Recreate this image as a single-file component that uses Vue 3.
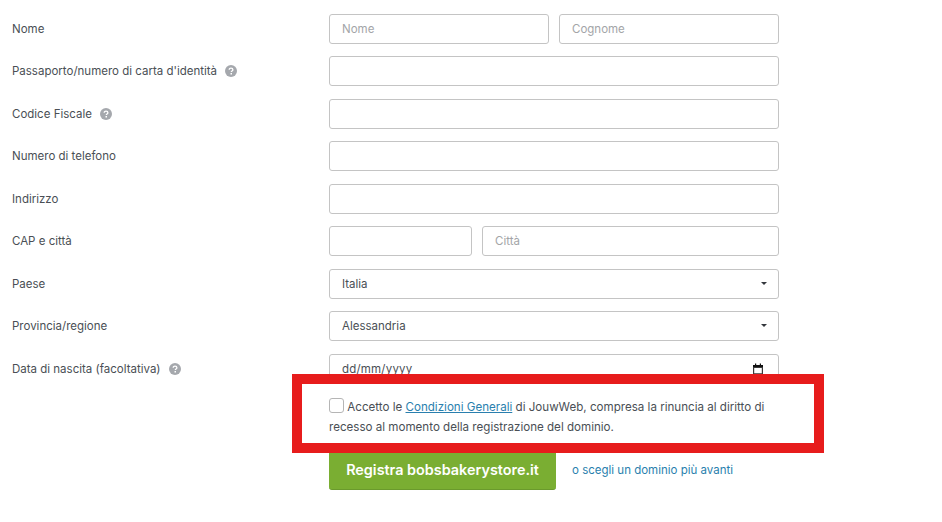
<template>
  <main class="page">
    <form class="form" @submit.prevent>
      <div v-for="row in rows" :key="row.label" class="row">
        <label class="row__label">
          {{ row.label }}
          <svg v-if="row.help" class="help" viewBox="0 0 12 12" width="12" height="12">
            <circle cx="6" cy="6" r="6" fill="#a5a8ad" />
            <path d="M4.2 4.7c0-1 .8-1.6 1.8-1.6s1.9.6 1.9 1.6c0 1.3-1.6 1.3-1.6 2.4" fill="none" stroke="#fff" stroke-width="1.3" />
            <rect x="5.5" y="8" width="1.5" height="1.5" fill="#fff" />
          </svg>
        </label>
        <div class="row__fields" :class="row.layout">
          <template v-for="field in row.fields" :key="field.id">
            <div v-if="field.type === 'select'" class="select">
              <select class="input">
                <option>{{ field.value }}</option>
              </select>
              <span class="caret"></span>
            </div>
            <div v-else-if="field.type === 'date'" class="select">
              <input class="input input--date" placeholder="dd/mm/yyyy" />
              <svg class="calendar" viewBox="0 0 12 12" width="12" height="12">
                <path d="M1 2h10v9.5H1z M2.2 5v5.3h7.6V5z" fill="#3a3a3a" fill-rule="evenodd" />
                <path d="M1 2h10v2H1zM3 .5h1.2V2H3zM7.8 .5H9V2H7.8z" fill="#111" />
              </svg>
            </div>
            <input v-else class="input" :placeholder="field.placeholder" />
          </template>
        </div>
      </div>
      <div class="terms">
        <p class="terms__text"><input type="checkbox" class="check" /> Accetto le <a href="#" class="terms__link">Condizioni Generali</a> di JouwWeb, compresa la rinuncia al diritto di recesso al momento della registrazione del dominio.</p>
      </div>
      <div class="actions">
        <button class="btn">Registra bobsbakerystore.it</button>
        <a href="#" class="later">o scegli un dominio più avanti</a>
      </div>
      <div class="highlight"></div>
    </form>
  </main>
</template>

<script setup>
const rows = [
  { label: "Nome", layout: "even", fields: [{ id: "first", placeholder: "Nome" }, { id: "last", placeholder: "Cognome" }] },
  { label: "Passaporto/numero di carta d'identità", help: true, fields: [{ id: "passport" }] },
  { label: "Codice Fiscale", help: true, fields: [{ id: "cf" }] },
  { label: "Numero di telefono", fields: [{ id: "phone" }] },
  { label: "Indirizzo", fields: [{ id: "address" }] },
  { label: "CAP e città", layout: "zip", fields: [{ id: "zip" }, { id: "city", placeholder: "Città" }] },
  { label: "Paese", fields: [{ id: "country", type: "select", value: "Italia" }] },
  { label: "Provincia/regione", fields: [{ id: "region", type: "select", value: "Alessandria" }] },
  { label: "Data di nascita (facoltativa)", help: true, fields: [{ id: "birth", type: "date" }] },
];
</script>

<style scoped>
* {
  box-sizing: border-box;
}

.page {
  width: 942px;
  height: 522px;
  overflow: hidden;
  background: #fff;
  color: #4a4f55;
  font-family: Inter, "Open Sans", sans-serif;
  font-size: 11.5px;
}

.form {
  position: relative;
  padding: 13.6px 0 0 12px;
}

.row {
  display: grid;
  grid-template-columns: 317px 450px;
  align-items: center;
  height: 30.5px;
  margin-bottom: 12px;
}

.row__label {
  display: flex;
  align-items: center;
  gap: 8px;
}

.row__fields {
  display: grid;
  grid-template-columns: 1fr;
  gap: 10px;
}

.row__fields.even {
  grid-template-columns: 1fr 1fr;
}

.row__fields.zip {
  grid-template-columns: 143px 1fr;
}

.input {
  display: block;
  width: 100%;
  height: 30px;
  padding: 0 12px;
  border: 1px solid #c4c4c4;
  border-radius: 3px;
  background: #fff;
  color: #4a4f55;
  font: inherit;
  outline: none;
  appearance: none;
}

.input::placeholder {
  color: #a3a5a8;
}

.input--date {
  letter-spacing: 0.2px;
}

.input--date::placeholder {
  color: #4a4f55;
}

.select {
  position: relative;
}

.caret {
  position: absolute;
  top: 13px;
  right: 12px;
  border-left: 3.5px solid transparent;
  border-right: 3.5px solid transparent;
  border-top: 3.5px solid #33373c;
}

.calendar {
  position: absolute;
  top: 9px;
  right: 15px;
}

.terms {
  margin-left: 317px;
  width: 450px;
  padding-top: 2px;
}

.terms__text {
  margin: 0;
  font-size: 11.6px;
  line-height: 19.5px;
}

.check {
  width: 15px;
  height: 15px;
  margin: 0;
  vertical-align: -2px;
  border: 1px solid #b5b5b5;
  border-radius: 3px;
  background: #fff;
  appearance: none;
}

.terms__link {
  color: #2a7fae;
}

.actions {
  display: flex;
  align-items: center;
  gap: 16px;
  margin-left: 317px;
  margin-top: 12.5px;
}

.btn {
  width: 227px;
  height: 40px;
  border: 0;
  border-bottom: 1px solid #6a9a2c;
  border-radius: 3px;
  background: #7aae32;
  color: #fff;
  font: inherit;
  font-size: 14.4px;
  font-weight: 600;
}

.later {
  color: #2a7fae;
  text-decoration: none;
}

.highlight {
  position: absolute;
  left: 292px;
  top: 374px;
  width: 532px;
  height: 79px;
  border: 10px solid #e71c1c;
}
</style>

<style>
html, body {
  margin: 0;
  overflow: hidden;
}
</style>
